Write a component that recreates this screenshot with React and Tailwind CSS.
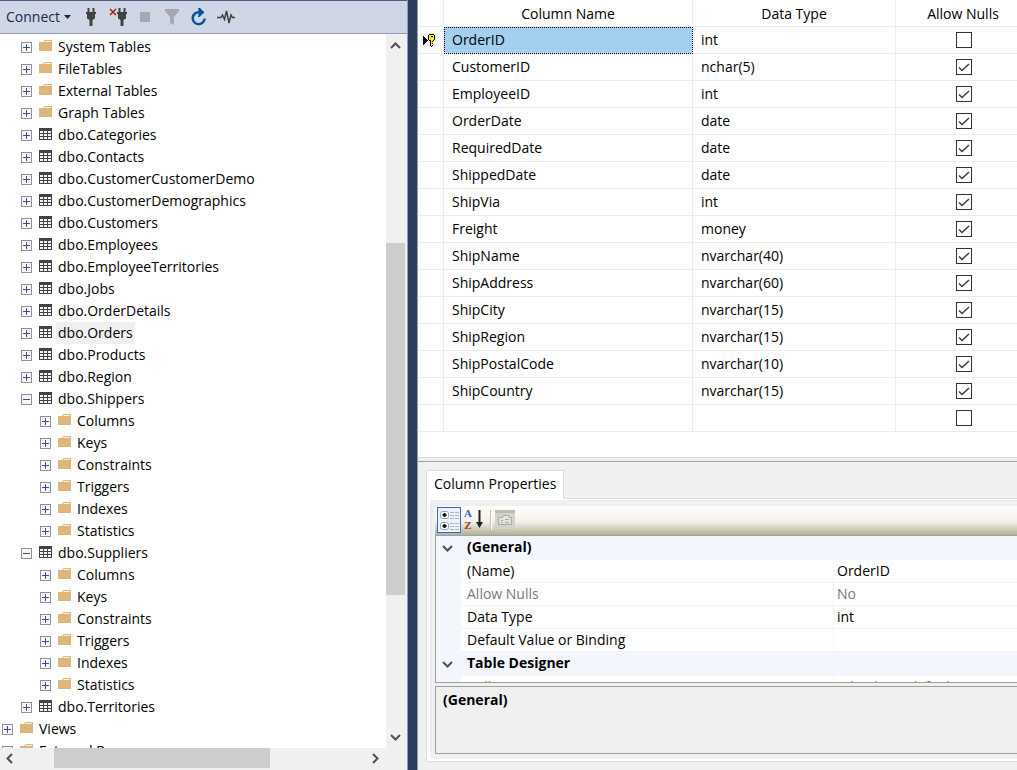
const TREE = [
  [1, "folder", "System Tables"],
  [1, "folder", "FileTables"],
  [1, "folder", "External Tables"],
  [1, "folder", "Graph Tables"],
  [1, "table", "dbo.Categories"],
  [1, "table", "dbo.Contacts"],
  [1, "table", "dbo.CustomerCustomerDemo"],
  [1, "table", "dbo.CustomerDemographics"],
  [1, "table", "dbo.Customers"],
  [1, "table", "dbo.Employees"],
  [1, "table", "dbo.EmployeeTerritories"],
  [1, "table", "dbo.Jobs"],
  [1, "table", "dbo.OrderDetails"],
  [1, "table", "dbo.Orders", "selected"],
  [1, "table", "dbo.Products"],
  [1, "table", "dbo.Region"],
  [1, "table", "dbo.Shippers", "open"],
  [2, "folder", "Columns"],
  [2, "folder", "Keys"],
  [2, "folder", "Constraints"],
  [2, "folder", "Triggers"],
  [2, "folder", "Indexes"],
  [2, "folder", "Statistics"],
  [1, "table", "dbo.Suppliers", "open"],
  [2, "folder", "Columns"],
  [2, "folder", "Keys"],
  [2, "folder", "Constraints"],
  [2, "folder", "Triggers"],
  [2, "folder", "Indexes"],
  [2, "folder", "Statistics"],
  [1, "table", "dbo.Territories"],
  [0, "folder", "Views"],
  [0, "folder", "External Resources"],
];

const COLUMNS = [
  ["OrderID", "int", false],
  ["CustomerID", "nchar(5)", true],
  ["EmployeeID", "int", true],
  ["OrderDate", "date", true],
  ["RequiredDate", "date", true],
  ["ShippedDate", "date", true],
  ["ShipVia", "int", true],
  ["Freight", "money", true],
  ["ShipName", "nvarchar(40)", true],
  ["ShipAddress", "nvarchar(60)", true],
  ["ShipCity", "nvarchar(15)", true],
  ["ShipRegion", "nvarchar(15)", true],
  ["ShipPostalCode", "nvarchar(10)", true],
  ["ShipCountry", "nvarchar(15)", true],
  ["", "", false],
];

const INDENT = ["pl-[2px]", "pl-[21px]", "pl-[40px]"];

function Expander({ open, label }) {
  return (
    <button type="button" aria-label={(open ? "Collapse " : "Expand ") + label} className="mt-[1px] h-[11px] w-[11px] shrink-0">
      <svg width="11" height="11" viewBox="0 0 11 11" shapeRendering="crispEdges" className="block">
        <rect x="0.5" y="0.5" width="10" height="10" fill="#f8f8f8" stroke="#919191" />
        <path d="M2 5.500h7" stroke="#3c4f96" />
        {!open && <path d="M5.500 2v7" stroke="#3c4f96" />}
      </svg>
    </button>
  );
}

function FolderIcon() {
  return (
    <svg width="15" height="14" viewBox="0 1 15 14" className="block shrink-0">
      <path d="M1 3h4l1.500-2H14v11H1z" fill="#dcb67a" />
      <path d="M6.500 2.500h6.500" stroke="#fbf3e4" />
    </svg>
  );
}

function TableIcon() {
  return (
    <svg width="15" height="14" viewBox="0 1 15 14" shapeRendering="crispEdges" className="block shrink-0">
      <path d="M1 1h13v12H1z" fill="#424242" />
      <path d="M2 4h3v2H2zM6 4h3v2H6zM10 4h3v2h-3zM2 7h3v2H2zM6 7h3v2H6zM10 7h3v2h-3zM2 10h3v2H2zM6 10h3v2H6zM10 10h3v2h-3z" fill="#f4f4f4" />
    </svg>
  );
}

function TreeRow({ level, icon, name, state }) {
  return (
    <li className={"flex h-[22px] shrink-0 items-center " + INDENT[level]}>
      <Expander open={state === "open"} label={name} />
      <span className="ml-[6px]">{icon === "folder" ? <FolderIcon /> : <TableIcon />}</span>
      <span className={"ml-[3px] px-[2px] leading-[22px] whitespace-nowrap " + (state === "selected" ? "bg-[#f0f0f0]" : "")}>{name}</span>
    </li>
  );
}

function Chevron({ d }) {
  return (
    <svg width="11" height="11" viewBox="0 0 11 11" className="block">
      <path d={d} fill="none" stroke="#505050" strokeWidth="2" />
    </svg>
  );
}

const UP = "M1 8l4.500-4.500L10 8";
const DOWN = "M1 3l4.500 4.500L10 3";
const LEFT = "M8 1L3.500 5.500L8 10";
const RIGHT = "M3 1l4.500 4.500L3 10";

function Plug() {
  return <path d="M1.500 0h2v4h3V0h2v4H10v2H9v4.500L6.500 12v6h-3v-6L1 10.500V6H0V4h1.500z" fill="#424242" />;
}

function Toolbar() {
  return (
    <div className="flex h-[34px] shrink-0 items-center border-t border-b border-t-[#4a5b86] border-b-[#8e9bbc] bg-[#cfd6e5] pl-[6px]">
      <button type="button" className="flex items-center gap-[4px] text-[#1b2a45]">
        Connect
        <svg width="7" height="4" viewBox="0 0 7 4"><path d="M0 0h7L3.500 4z" fill="#1b293e" /></svg>
      </button>
      <button type="button" aria-label="Connect Object Explorer" className="ml-[15px]">
        <svg width="10" height="18" viewBox="0 0 10 18" className="block"><Plug /></svg>
      </button>
      <button type="button" aria-label="Disconnect" className="ml-[13px]">
        <svg width="18" height="18" viewBox="0 0 18 18" className="block">
          <path d="M1 1l6 6M7 1L1 7" stroke="#a1260d" strokeWidth="1.500" />
          <g transform="translate(8 0)"><Plug /></g>
        </svg>
      </button>
      <button type="button" aria-label="Stop" className="ml-[13px] h-[10px] w-[10px] bg-[#a5a8b0]" />
      <button type="button" aria-label="Filter" className="ml-[15px]">
        <svg width="15" height="16" viewBox="0 0 15 16" className="block"><path d="M0 0h14v2L9 8v8l-4-2V8L0 2z" fill="#a5a8b0" /></svg>
      </button>
      <button type="button" aria-label="Refresh" className="ml-[10px]">
        <svg width="17" height="18" viewBox="0 0 17 18" className="block">
          <path d="M9.500 4.200A6 6 0 1 0 14.700 10.500" fill="none" stroke="#00539c" strokeWidth="2.500" />
          <path d="M8 0l2 0l4 4v1.500h-1l-3.500 3.500H8l1-4.500z" fill="#00539c" />
        </svg>
      </button>
      <button type="button" aria-label="Activity Monitor" className="ml-[10px]">
        <svg width="18" height="14" viewBox="0 0 18 14" className="block">
          <path d="M0 7.500h4l1.500-2.500 2 4.500L9.500 1l2.500 12 2-8 1.500 2.500H18" fill="none" stroke="#424242" strokeWidth="1.500" />
        </svg>
      </button>
    </div>
  );
}

function ObjectExplorer() {
  return (
    <aside className="flex w-[408px] shrink-0 flex-col border-r border-[#8e9bbc] bg-[#f0f0f0]">
      <Toolbar />
      <div className="flex min-h-0 flex-1">
        <ul className="flex min-w-0 flex-1 flex-col overflow-hidden bg-white pt-[2px]">
          {TREE.map(([level, icon, name, state], i) => (
            <TreeRow key={i} level={level} icon={icon} name={name} state={state} />
          ))}
        </ul>
        <div className="mr-[2px] flex w-[19px] flex-col items-center bg-[#f0f0f0]">
          <button type="button" aria-label="Scroll up" className="flex h-[22px] w-full items-center justify-center"><Chevron d={UP} /></button>
          <div className="w-full grow-[187]" />
          <div className="w-full grow-[352] bg-[#cdcdcd]" />
          <div className="w-full grow-[131]" />
          <button type="button" aria-label="Scroll down" className="flex h-[22px] w-full items-center justify-center"><Chevron d={DOWN} /></button>
        </div>
      </div>
      <div className="mr-[21px] mb-[2px] flex h-[20px] shrink-0 items-center">
        <button type="button" aria-label="Scroll left" className="flex h-full w-[18px] items-center justify-center"><Chevron d={LEFT} /></button>
        <div className="grow-[36]" />
        <div className="h-full grow-[216] bg-[#cdcdcd]" />
        <div className="grow-[94]" />
        <button type="button" aria-label="Scroll right" className="flex h-full w-[22px] items-center justify-center"><Chevron d={RIGHT} /></button>
      </div>
    </aside>
  );
}

function KeyMarker() {
  return (
    <svg width="15" height="14" viewBox="0 0 15 14" shapeRendering="crispEdges" className="ml-[3px] block bg-[#f0f0f0]" role="img" aria-label="Primary key">
      <path d="M2 3h1v1h1v1h1v1h1v1h1v1H6v1H5v1H4v1H3v1H2z" fill="#000" />
      <path d="M8 1h5v1h1v5h-1v1h-1v5h-1v1h-1v-1H9V8H8V7H7V2h1z" fill="#000" />
      <path d="M8 2h5v5h-1v1h-1v1h1v1h-1v1h1v1h-1v1h-1V7H8z" fill="#ffee00" />
      <path d="M10 3h2v1h-2z" fill="#000" />
    </svg>
  );
}

function NullsCheckbox({ name, checked }) {
  return (
    <label className="mx-auto grid h-[16px] w-[16px]">
      <input
        type="checkbox"
        defaultChecked={checked}
        aria-label={"Allow nulls " + name}
        className="peer col-start-1 row-start-1 h-[16px] w-[16px] appearance-none border border-[#333] bg-white"
      />
      <svg width="16" height="16" viewBox="0 0 16 16" className="pointer-events-none col-start-1 row-start-1 hidden peer-checked:block">
        <path d="M3 8.500l3 3L13 5" fill="none" stroke="#3c3c3c" strokeWidth="1.500" />
      </svg>
    </label>
  );
}

function ColumnGrid() {
  return (
    <div className="min-h-0 flex-1 overflow-hidden bg-white">
      <table className="w-full table-fixed border-separate border-spacing-0">
        <colgroup>
          <col className="w-[26px]" />
          <col className="w-[249px]" />
          <col className="w-[203px]" />
          <col />
        </colgroup>
        <thead>
          <tr className="h-[27px]">
            {["", "Column Name", "Data Type", "Allow Nulls"].map((h, i) => (
              <th key={i} scope="col" className={"border-b border-[#ececec] p-0 pt-[2px] text-center leading-[20px] font-normal " + (i < 3 ? "border-r" : "pl-[13px]")}>{h}</th>
            ))}
          </tr>
        </thead>
        <tbody>
          {COLUMNS.map(([name, type, nulls], i) => (
            <tr key={i} className="h-[27px]">
              <td className="border-r border-b border-[#ececec] p-0">{i === 0 && <KeyMarker />}</td>
              <td className={"border-r border-b border-[#ececec] p-0 pl-[8px] leading-[20px] " + (i === 0 ? "bg-[#a3cff0] outline-1 -outline-offset-1 outline-black outline-dotted" : "")}>{name}</td>
              <td className="border-r border-b border-[#ececec] p-0 pl-[8px] leading-[20px]">{type}</td>
              <td className="border-b border-[#ececec] p-0 pl-[14px]"><NullsCheckbox name={name} checked={nulls} /></td>
            </tr>
          ))}
        </tbody>
      </table>
    </div>
  );
}

function CategoryRow({ name }) {
  return (
    <tr className="h-[24px] bg-[#f3f6fc]">
      <td className="p-0"><button type="button" aria-label={"Toggle " + name} className="ml-[6px] block"><Chevron d={DOWN} /></button></td>
      <th scope="rowgroup" colSpan={2} className="p-0 pb-[2px] pl-[6px] text-left leading-[20px] font-bold">{name}</th>
    </tr>
  );
}

function PropertyRow({ name, value, muted }) {
  return (
    <tr className={"h-[23px] " + (muted ? "text-[#7a7a7a]" : "")}>
      <td className="bg-[#f3f6fc] p-0" />
      <td className="border-r border-b border-[#f2f4f8] p-0 pl-[6px] leading-[20px]">{name}</td>
      <td className="border-b border-[#f2f4f8] p-0 pl-[3px] leading-[20px]">{value}</td>
    </tr>
  );
}

function PropertyToolbar() {
  return (
    <div className="flex h-[29px] shrink-0 items-start bg-linear-to-b from-[#fefefa] via-[#f3f1e8] via-55% to-[#b0b194] pt-px">
      <button type="button" aria-label="Categorized" className="ml-[2px] border border-[#316ac5] bg-[#eef1f8]">
        <svg width="22" height="24" viewBox="0 0 22 24" className="block">
          <g fill="#fff" stroke="#8ca0c4"><rect x="2.500" y="3.500" width="8" height="7" rx="2" /><rect x="2.500" y="14.500" width="8" height="7" rx="2" /></g>
          <path d="M4.500 7h4M6.500 5v4M4.500 18h4M6.500 16v4" stroke="#111" strokeWidth="2" />
          <path d="M12 4.500h4M17 4.500h4M12 7.500h4M17 7.500h4M12 10.500h4M17 10.500h4M12 15.500h4M17 15.500h4M12 18.500h4M17 18.500h4M12 21.500h4M17 21.500h4" stroke="#b4b4b4" />
        </svg>
      </button>
      <button type="button" aria-label="Alphabetical" className="ml-[3px] flex items-center">
        <span className="flex flex-col font-['Liberation_Serif',serif] text-[11px] leading-[12px] font-bold">
          <span className="text-[#3f62b8]">A</span>
          <span className="text-[#a0302c]">Z</span>
        </span>
        <svg width="9" height="20" viewBox="0 0 9 20" className="ml-[3px] block"><path d="M4.500 1v14" stroke="#222" strokeWidth="2" /><path d="M1 13L4.500 19l3.500-6z" fill="#222" /></svg>
      </button>
      <div className="mt-[3px] ml-[6px] h-[20px] w-[2px] border-l border-[#c5c2b0] bg-white" />
      <button type="button" aria-label="Property Pages" disabled className="mt-[3px] ml-[3px]">
        <svg width="20" height="19" viewBox="0 0 20 19" className="block">
          <rect width="20" height="19" fill="#d2d2ca" />
          <path d="M0 1.500h20" stroke="#bcbcb4" strokeWidth="3" />
          <path d="M3.500 14.500v-7h4l1-2h5l1 2h2v7z" fill="#e4e4de" stroke="#aaaaa2" />
          <path d="M6 10.500h2M10 9.500h4M6 12.500h2M10 12.500h4" stroke="#aaaaa2" />
        </svg>
      </button>
    </div>
  );
}

function ColumnProperties() {
  return (
    <section className="flex h-[309px] shrink-0 flex-col border-t border-[#a0a0a0] bg-[#f0f0f0] pt-[8px] pb-[8px] pl-[8px]">
      <div role="tablist" className="relative z-10 -mb-px flex">
        <button type="button" role="tab" aria-selected="true" className="h-[29px] border border-b-0 border-[#dcdcdc] bg-white px-[7px] pb-[2px]">Column Properties</button>
      </div>
      <div className="flex min-h-0 flex-1 flex-col border-y border-l border-[#dcdcdc] bg-white pt-px pb-[2px] pl-[3px]">
        <div className="flex min-h-0 flex-1 flex-col bg-[#f0f0f0] pt-[6px] pb-[5px] pl-[5px]">
          <PropertyToolbar />
          <div className="min-h-0 flex-1 overflow-hidden border-y border-l border-[#a0a0a0] bg-white">
            <table className="w-full table-fixed border-separate border-spacing-0">
              <colgroup>
                <col className="w-[25px]" />
                <col className="w-[373px]" />
                <col />
              </colgroup>
              <tbody>
                <CategoryRow name="(General)" />
                <PropertyRow name="(Name)" value="OrderID" />
                <PropertyRow name="Allow Nulls" value="No" muted />
                <PropertyRow name="Data Type" value="int" />
                <PropertyRow name="Default Value or Binding" value="" />
                <CategoryRow name="Table Designer" />
                <PropertyRow name="Collation" value="<database default>" muted />
              </tbody>
            </table>
          </div>
          <div className="mt-[3px] h-[68px] shrink-0 border-y border-l border-[#a0a0a0] px-[7px] pt-[3px] leading-[20px] font-bold">(General)</div>
        </div>
      </div>
    </section>
  );
}

export default function App() {
  return (
    <div className="flex h-screen overflow-hidden bg-[#2d3d5c] font-['Open_Sans','Noto_Sans',sans-serif] text-[14px] leading-[20px] text-black">
      <ObjectExplorer />
      <div className="w-[10px] shrink-0 border-r border-[#8e9bbc]" />
      <main className="flex min-w-0 flex-1 flex-col">
        <ColumnGrid />
        <div className="h-[4px] shrink-0 border-t border-[#dcdcdc] bg-[#f0f0f0]" />
        <ColumnProperties />
      </main>
    </div>
  );
}
